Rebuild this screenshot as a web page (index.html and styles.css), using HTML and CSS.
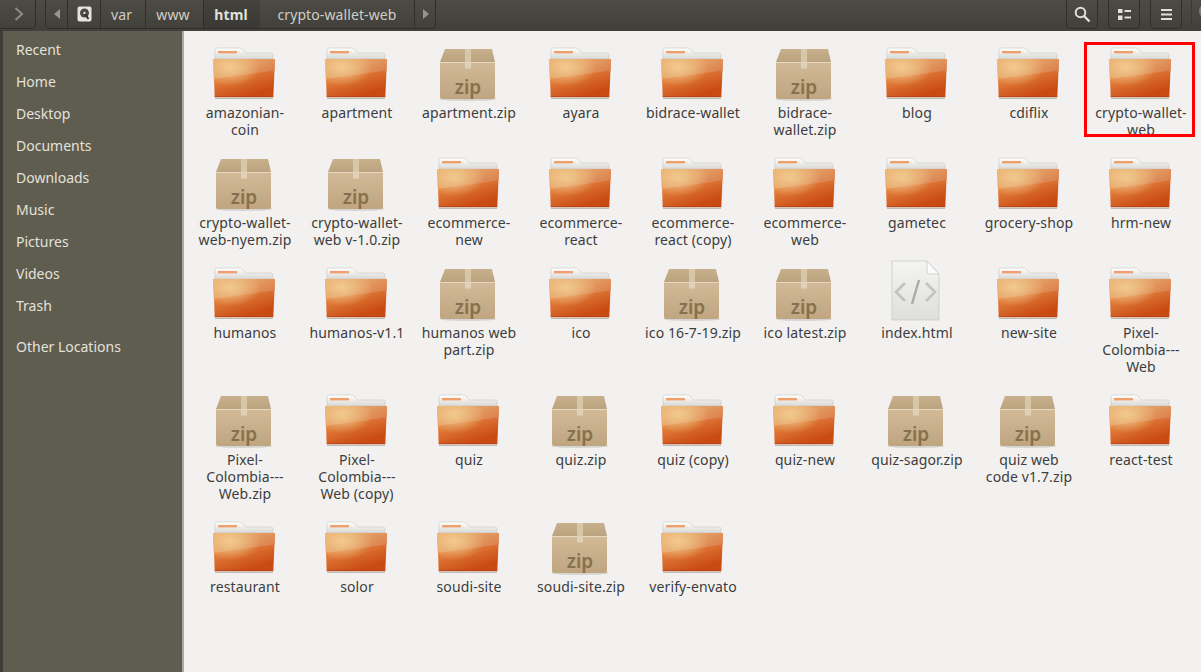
FILE: index.html
```html
<!DOCTYPE html>
<html lang="en">
<head>
<meta charset="utf-8">
<title>html</title>
<link rel="stylesheet" href="styles.css">
</head>
<body>
<svg class="defs" width="0" height="0" aria-hidden="true">
  <defs>
    <linearGradient id="fbase" x1="0" y1="0" x2="1" y2="0.7">
      <stop offset="0" stop-color="#eaa968"/>
      <stop offset="0.55" stop-color="#e39a62"/>
      <stop offset="1" stop-color="#da7c4b"/>
    </linearGradient>
    <linearGradient id="flow" x1="0" y1="0" x2="0.5" y2="1">
      <stop offset="0" stop-color="#e99a58"/>
      <stop offset="0.55" stop-color="#de7636"/>
      <stop offset="1" stop-color="#c94a12"/>
    </linearGradient>
    <radialGradient id="fglow" cx="0.27" cy="0.22" r="0.5">
      <stop offset="0" stop-color="#f2cd90" stop-opacity="0.95"/>
      <stop offset="1" stop-color="#f2cd90" stop-opacity="0"/>
    </radialGradient>
    <linearGradient id="fback" x1="0" y1="0" x2="0" y2="1">
      <stop offset="0" stop-color="#ffffff"/>
      <stop offset="1" stop-color="#d9d8d4"/>
    </linearGradient>
    <linearGradient id="zbox" x1="0" y1="0" x2="0" y2="1">
      <stop offset="0" stop-color="#d2ba98"/>
      <stop offset="1" stop-color="#bfa580"/>
    </linearGradient>
    <linearGradient id="ztop" x1="0" y1="0" x2="0" y2="1">
      <stop offset="0" stop-color="#c8b08d"/>
      <stop offset="1" stop-color="#bca37f"/>
    </linearGradient>
    <linearGradient id="hpage" x1="0" y1="0" x2="0" y2="1">
      <stop offset="0" stop-color="#f4f4f3"/>
      <stop offset="1" stop-color="#dededc"/>
    </linearGradient>
    <symbol id="folder" viewBox="0 0 64 64">
      <path d="M3 19V10q0-2 2-2h22q2 0 3 1l4 4h25q2 0 2 2v4z" fill="url(#fback)" stroke="#c9c8c4" stroke-width=".6"/>
      <rect x="6" y="11" width="19" height="2.4" fill="#f0a06c"/>
      <path d="M3 58h58v1H3z" fill="#bdbbb6"/>
      <path d="M1.3 19H63l-1.7 38H2.7z" fill="url(#flow)"/>
      <path d="M1.3 19H63l-.6 11.500L1.800 39z" fill="url(#fbase)"/>
      <path d="M1.3 19H63l-1.700 38H2.700z" fill="url(#fglow)"/>
      <path d="M2.700 56.400h58.600v.8H2.700z" fill="#a83c10"/>
    </symbol>
    <symbol id="zip" viewBox="0 0 64 64">
      <ellipse cx="32" cy="59" rx="29" ry="2" fill="#d5d3cf"/>
      <path d="M9 9h47l3 13H4z" fill="url(#ztop)"/>
      <path d="M29 9h6v13h-6z" fill="#d8c6a9"/>
      <path d="M4 22h55v35q0 2-2 2H6q-2 0-2-2z" fill="url(#zbox)"/>
      <path d="M4 22h55v1H4z" fill="#e6d8c2"/>
      <path d="M29 22h6v6.500h-6z" fill="#e0d1b9"/>
      <text class="zip-mark" x="32" y="53.500" text-anchor="middle">zip</text>
    </symbol>
    <symbol id="html" viewBox="0 -2 64 64">
      <path d="M8 -1H43L55 12V58H8z" fill="url(#hpage)" stroke="#c4c4c2" stroke-width=".7"/>
      <path d="M43 -1L55 12H46q-3 0-3-3z" fill="#fbfbfb" stroke="#c4c4c2" stroke-width=".7"/>
      <path d="M21 21L12 30L21 39M42 21L51 30L42 39" fill="none" stroke="#c2c2c0" stroke-width="2.600"/>
      <path d="M35 18L28 42" fill="none" stroke="#a9a9a7" stroke-width="2.400"/>
    </symbol>
  </defs>
</svg>

<header class="toolbar">
  <div class="tool-btn nav-forward">
    <svg class="glyph" width="10" height="14" viewBox="0 0 10 14"><path d="M1.500 1L8 7l-6.500 6" fill="none" stroke="#8e8c84" stroke-width="2"/></svg>
  </div>
  <nav class="pathbar">
    <span class="path-arrow"><svg width="6" height="10" viewBox="0 0 6 10"><path d="M6 0v10L0 5z" fill="#96948c"/></svg></span>
    <span class="crumb crumb-icon">
      <svg width="15" height="16" viewBox="0 0 15 16"><rect x=".5" y=".5" width="14" height="15" rx="2" fill="#e6e4df"/><circle cx="7.500" cy="7" r="4.500" fill="#4a4944"/><circle cx="7.500" cy="7" r="1.200" fill="#e6e4df"/><path d="M8 8l3.500 5" stroke="#2f2e2b" stroke-width="2"/></svg>
    </span>
    <span class="crumb crumb-var">var</span>
    <span class="crumb crumb-www">www</span>
    <span class="crumb crumb-active">html</span>
    <span class="crumb crumb-last">crypto-wallet-web</span>
    <span class="path-arrow path-arrow-end"><svg width="6" height="10" viewBox="0 0 6 10"><path d="M0 0v10l6-5z" fill="#96948c"/></svg></span>
  </nav>
  <div class="tool-group">
    <div class="tool-btn square">
      <svg width="17" height="17" viewBox="0 0 17 17"><circle cx="6.500" cy="6.500" r="4.800" fill="none" stroke="#e2e0da" stroke-width="2"/><path d="M10 10l5.500 5.500" stroke="#e2e0da" stroke-width="2.400"/></svg>
    </div>
    <div class="tool-btn square">
      <svg width="13" height="11" viewBox="0 0 13 11"><path d="M0 0h4.500v4H0zM0 6.500h4.500v4.500H0zM6.500 1h6.500v2H6.500zM6.500 7.500h6.500v2H6.500z" fill="#e2e0da"/></svg>
    </div>
    <div class="tool-btn square">
      <svg width="11" height="11" viewBox="0 0 11 11"><path d="M0 0h11v2H0zM0 4.500h11v2H0zM0 9h11v2H0z" fill="#e2e0da"/></svg>
    </div>
  </div>
  <span class="tool-sep"></span>
  <span class="window-dot"></span>
</header>

<div class="body-row">
  <aside class="sidebar">
    <ul class="places">
      <li>Recent</li>
      <li>Home</li>
      <li>Desktop</li>
      <li>Documents</li>
      <li>Downloads</li>
      <li>Music</li>
      <li>Pictures</li>
      <li>Videos</li>
      <li>Trash</li>
      <li class="places-other">Other Locations</li>
    </ul>
  </aside>
  <main class="files">
    <div class="file"><svg class="icon"><use href="#folder"/></svg><span class="name">amazonian-<br>coin</span></div>
    <div class="file"><svg class="icon"><use href="#folder"/></svg><span class="name">apartment</span></div>
    <div class="file"><svg class="icon"><use href="#zip"/></svg><span class="name">apartment.zip</span></div>
    <div class="file"><svg class="icon"><use href="#folder"/></svg><span class="name">ayara</span></div>
    <div class="file"><svg class="icon"><use href="#folder"/></svg><span class="name">bidrace-wallet</span></div>
    <div class="file"><svg class="icon"><use href="#zip"/></svg><span class="name">bidrace-<br>wallet.zip</span></div>
    <div class="file"><svg class="icon"><use href="#folder"/></svg><span class="name">blog</span></div>
    <div class="file"><svg class="icon"><use href="#folder"/></svg><span class="name">cdiflix</span></div>
    <div class="file marked"><svg class="icon"><use href="#folder"/></svg><span class="name">crypto-wallet-<br>web</span><span class="mark"></span></div>

    <div class="file"><svg class="icon"><use href="#zip"/></svg><span class="name">crypto-wallet-<br>web-nyem.zip</span></div>
    <div class="file"><svg class="icon"><use href="#zip"/></svg><span class="name">crypto-wallet-<br>web v-1.0.zip</span></div>
    <div class="file"><svg class="icon"><use href="#folder"/></svg><span class="name">ecommerce-<br>new</span></div>
    <div class="file"><svg class="icon"><use href="#folder"/></svg><span class="name">ecommerce-<br>react</span></div>
    <div class="file"><svg class="icon"><use href="#folder"/></svg><span class="name">ecommerce-<br>react (copy)</span></div>
    <div class="file"><svg class="icon"><use href="#folder"/></svg><span class="name">ecommerce-<br>web</span></div>
    <div class="file"><svg class="icon"><use href="#folder"/></svg><span class="name">gametec</span></div>
    <div class="file"><svg class="icon"><use href="#folder"/></svg><span class="name">grocery-shop</span></div>
    <div class="file"><svg class="icon"><use href="#folder"/></svg><span class="name">hrm-new</span></div>

    <div class="file"><svg class="icon"><use href="#folder"/></svg><span class="name">humanos</span></div>
    <div class="file"><svg class="icon"><use href="#folder"/></svg><span class="name">humanos-v1.1</span></div>
    <div class="file"><svg class="icon"><use href="#zip"/></svg><span class="name">humanos web<br>part.zip</span></div>
    <div class="file"><svg class="icon"><use href="#folder"/></svg><span class="name">ico</span></div>
    <div class="file"><svg class="icon"><use href="#zip"/></svg><span class="name">ico 16-7-19.zip</span></div>
    <div class="file"><svg class="icon"><use href="#zip"/></svg><span class="name">ico latest.zip</span></div>
    <div class="file"><svg class="icon"><use href="#html"/></svg><span class="name">index.html</span></div>
    <div class="file"><svg class="icon"><use href="#folder"/></svg><span class="name">new-site</span></div>
    <div class="file"><svg class="icon"><use href="#folder"/></svg><span class="name">Pixel-<br>Colombia---<br>Web</span></div>

    <div class="file"><svg class="icon"><use href="#zip"/></svg><span class="name">Pixel-<br>Colombia---<br>Web.zip</span></div>
    <div class="file"><svg class="icon"><use href="#folder"/></svg><span class="name">Pixel-<br>Colombia---<br>Web (copy)</span></div>
    <div class="file"><svg class="icon"><use href="#folder"/></svg><span class="name">quiz</span></div>
    <div class="file"><svg class="icon"><use href="#zip"/></svg><span class="name">quiz.zip</span></div>
    <div class="file"><svg class="icon"><use href="#folder"/></svg><span class="name">quiz (copy)</span></div>
    <div class="file"><svg class="icon"><use href="#folder"/></svg><span class="name">quiz-new</span></div>
    <div class="file"><svg class="icon"><use href="#zip"/></svg><span class="name">quiz-sagor.zip</span></div>
    <div class="file"><svg class="icon"><use href="#zip"/></svg><span class="name">quiz web<br>code v1.7.zip</span></div>
    <div class="file"><svg class="icon"><use href="#folder"/></svg><span class="name">react-test</span></div>

    <div class="file"><svg class="icon"><use href="#folder"/></svg><span class="name">restaurant</span></div>
    <div class="file"><svg class="icon"><use href="#folder"/></svg><span class="name">solor</span></div>
    <div class="file"><svg class="icon"><use href="#folder"/></svg><span class="name">soudi-site</span></div>
    <div class="file"><svg class="icon"><use href="#zip"/></svg><span class="name">soudi-site.zip</span></div>
    <div class="file"><svg class="icon"><use href="#folder"/></svg><span class="name">verify-envato</span></div>
  </main>
</div>
</body>
</html>
```
FILE: styles.css
```css
* { box-sizing: border-box; }

html, body {
  margin: 0;
  height: 672px;
  overflow: hidden;
}

body {
  display: flex;
  flex-direction: column;
  font-family: "Noto Sans", "Open Sans", sans-serif;
  font-size: 14px;
  background: #f2f1f0;
}

.defs { position: absolute; }

.toolbar {
  flex: none;
  height: 31px;
  display: flex;
  overflow: hidden;
  background: linear-gradient(#4d4b45, #403f3a);
  color: #cfcdc6;
}

.tool-btn {
  flex: none;
  display: flex;
  align-items: center;
  justify-content: center;
  height: 29px;
  border: 1px solid #2f2e2a;
  border-top: none;
  border-radius: 0 0 5px 5px;
}

.nav-forward {
  width: 36px;
  border-left: none;
  border-radius: 0 0 5px 0;
  padding-left: 3px;
}

.pathbar {
  flex: none;
  display: flex;
  height: 29px;
  width: 391px;
  margin-left: 9px;
  border: 1px solid #2f2e2a;
  border-top: none;
  border-radius: 0 0 5px 5px;
}

.path-arrow {
  width: 21px;
  display: flex;
  align-items: center;
  justify-content: center;
  flex: none;
}

.path-arrow-end { margin-left: auto; }

.crumb {
  display: flex;
  align-items: center;
  justify-content: center;
  border-left: 1px solid #2f2e2a;
  flex: none;
  letter-spacing: .1px;
}

.crumb-icon { width: 33px; }
.crumb-var { width: 45px; padding-right: 3px; }
.crumb-www { width: 58px; padding-right: 3px; }

.crumb-active {
  width: 57px;
  padding-right: 2px;
  font-weight: 700;
  color: #e2e0da;
  background: linear-gradient(#43423d, #3a3935);
}

.crumb-last {
  width: 155px;
  border-right: 1px solid #2f2e2a;
  border-left: none;
}

.tool-group {
  margin-left: auto;
  display: flex;
  gap: 10px;
}

.square {
  width: 32px;
}

.tool-sep {
  flex: none;
  width: 1px;
  height: 24px;
  margin-left: 9px;
  background: #3a3935;
}

.window-dot {
  flex: none;
  width: 16px;
  height: 16px;
  margin: 3px -14px 0 7px;
  border-radius: 50%;
  background: #807e77;
}

.body-row {
  flex: 1;
  display: flex;
  min-height: 0;
}

.sidebar {
  flex: none;
  width: 184px;
  background: #5f5c50;
  border-left: 3px solid #3e3d38;
  border-right: 2px solid #a9a8a4;
  color: #e4e2da;
}

.places {
  list-style: none;
  margin: 0;
  padding: 3px 0 0 13px;
}

.places li {
  height: 32px;
  line-height: 32px;
}

.places .places-other {
  margin-top: 9px;
}

.files {
  flex: 1;
  display: grid;
  grid-template-columns: repeat(9, 112px);
  grid-auto-rows: max-content;
  row-gap: 12px;
  padding: 9px 0 0 4px;
  min-width: 0;
}

.file {
  position: relative;
  display: flex;
  flex-direction: column;
  align-items: center;
}

.icon {
  display: block;
  width: 64px;
  height: 64px;
  overflow: visible;
}

.name {
  display: block;
  padding-left: 2px;
  text-align: center;
  line-height: 17px;
  letter-spacing: .12px;
  color: #3d3d3d;
  white-space: nowrap;
}

.mark {
  position: absolute;
  left: 0;
  top: 2px;
  width: 111px;
  height: 95px;
  border: 3px solid #f00;
}

.zip-mark {
  font-family: "Noto Sans", sans-serif;
  font-size: 19px;
  font-weight: 600;
  fill: #86714f;
}
```
